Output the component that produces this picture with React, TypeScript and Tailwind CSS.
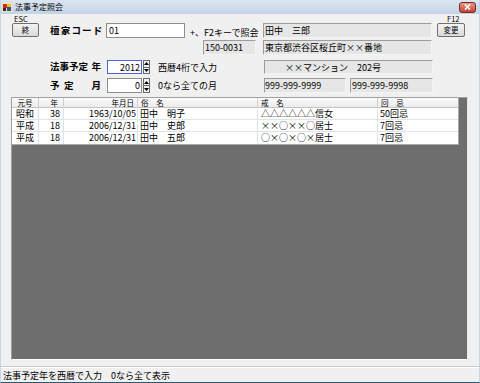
import React from 'react';

interface HojiRow {
  era: string;
  year: string;
  date: string;
  name: string;
  kaimyo: string;
  kaiki: string;
}

const rows: HojiRow[] = [
  { era: '昭和', year: '38', date: '1963/10/05', name: '田中　明子', kaimyo: '△△△△△△信女', kaiki: '50回忌' },
  { era: '平成', year: '18', date: '2006/12/31', name: '田中　史郎', kaimyo: '××○××○居士', kaiki: '7回忌' },
  { era: '平成', year: '18', date: '2006/12/31', name: '田中　五郎', kaimyo: '○×○×○×居士', kaiki: '7回忌' },
];

const cols = 'grid grid-cols-[27px_25px_74px_120px_120px_81px]';

const ReadBox = ({ className = '', children }: { className?: string; children?: React.ReactNode }) => (
  <div
    className={`h-full flex items-center bg-[#e6e6e6] border border-t-[#9c9c9c] border-l-[#9c9c9c] border-b-[#f4f4f4] border-r-[#f4f4f4] text-[9px] leading-none whitespace-nowrap overflow-hidden ${className}`}
  >
    {children}
  </div>
);

const WinButton = ({ label }: { label: string }) => (
  <div className="h-[14px] mb-[1px] flex items-center justify-center rounded-[2px] border border-[#707070] bg-linear-to-b from-[#f4f4f4] to-[#d9d9d9] text-[7.5px] leading-none">
    {label}
  </div>
);

const Spinner = () => (
  <div className="ml-[1px] w-[7px] h-full flex flex-col">
    <div className="flex-1 flex items-center justify-center border border-[#6a6a6a] bg-[#f2f2f2]">
      <svg width="5" height="3" viewBox="0 0 5 3">
        <path d="M2.5 0 L5 3 L0 3 Z" fill="#000" />
      </svg>
    </div>
    <div className="flex-1 flex items-center justify-center border border-t-0 border-[#6a6a6a] bg-[#f2f2f2]">
      <svg width="5" height="3" viewBox="0 0 5 3">
        <path d="M0 0 L5 0 L2.5 3 Z" fill="#000" />
      </svg>
    </div>
  </div>
);

export default function App() {
  return (
    <div className="w-[480px] h-[383px] flex flex-col bg-[#f0f0f0] border-x border-b border-x-[#c6d5e8] border-b-[#2c5a70] font-['Noto_Sans_CJK_JP',sans-serif] text-black overflow-hidden">
      {/* title bar */}
      <div className="h-[14px] shrink-0 flex items-center bg-linear-to-b from-[#dbe6f3] to-[#c3d3e7]">
        <svg className="ml-[1px]" width="10" height="10" viewBox="0 0 10 10">
          <rect x="0" y="1" width="10" height="9" fill="#f3e3b0" />
          <rect x="1" y="2" width="4" height="4" fill="#d02a1e" />
          <rect x="5" y="2" width="4" height="3" fill="#f0c020" />
          <rect x="1" y="6" width="3" height="3" fill="#2a2a2a" />
          <rect x="5" y="5" width="4" height="4" fill="#3050a0" />
        </svg>
        <span className="ml-[3px] text-[8px] leading-none">法事予定照会</span>
        <div className="ml-auto mr-[3px] w-[17px] h-[11px] rounded-[3px] border border-[#7b2a1f] bg-linear-to-b from-[#e8998c] to-[#c4402f] flex items-center justify-center">
          <svg width="7" height="6" viewBox="0 0 7 6">
            <path d="M1 0.5 L6 5.5 M6 0.5 L1 5.5" stroke="#fff" strokeWidth="1.6" />
          </svg>
        </div>
      </div>

      {/* row A */}
      <div className="h-[24px] shrink-0 flex items-end">
        <div className="ml-[11px] w-[27px] flex flex-col">
          <div className="h-[8px] pl-[2px] text-[7.5px] leading-[8px]">ESC</div>
          <WinButton label="終" />
        </div>
        <div className="ml-[11px] w-[56px] h-[15px] flex items-center text-[9.5px] font-bold tracking-[1.2px] leading-none">
          檀家コード
        </div>
        <div className="w-[79px] h-[15px] flex items-center pl-[2px] bg-white border border-[#8e8f8f] text-[9px] leading-none">
          01
        </div>
        <div className="ml-[5px] w-[73px] h-[15px] flex items-end pb-[1px] text-[9px] leading-none whitespace-nowrap">
          +、F2キーで照会
        </div>
        <div className="w-[169px] h-[15px]">
          <ReadBox className="pl-[1px]">田中　三郎</ReadBox>
        </div>
        <div className="ml-[5px] w-[28px] flex flex-col">
          <div className="h-[8px] pl-[10px] text-[7.5px] leading-[8px]">F12</div>
          <WinButton label="変更" />
        </div>
      </div>

      {/* row B */}
      <div className="mt-[2px] h-[15px] shrink-0 flex">
        <div className="ml-[202px] w-[53px]">
          <ReadBox className="pl-[1px]">150-0031</ReadBox>
        </div>
        <div className="ml-[7px] w-[169px]">
          <ReadBox className="pl-[1px]">東京都渋谷区桜丘町××番地</ReadBox>
        </div>
      </div>

      {/* row C */}
      <div className="mt-[5px] h-[14px] shrink-0 flex">
        <div className="ml-[49px] w-[51px] flex items-center justify-between text-[9.5px] font-bold leading-none">
          <span>法事予定</span>
          <span>年</span>
        </div>
        <div className="ml-[6px] w-[35px] h-full flex items-center justify-end pr-[1px] bg-white border border-[#4d63d8] text-[9px] leading-none">
          2012
        </div>
        <Spinner />
        <div className="ml-[8px] w-[106px] flex items-center text-[9px] leading-none whitespace-nowrap">
          西暦4桁で入力
        </div>
        <div className="w-[169px]">
          <ReadBox className="pl-[20px]">××マンション　202号</ReadBox>
        </div>
      </div>

      {/* row D */}
      <div className="mt-[4px] h-[15px] shrink-0 flex">
        <div className="ml-[49px] w-[51px] flex items-center text-[9.5px] font-bold leading-none">
          <span className="w-[14px]">予</span>
          <span>定</span>
          <span className="ml-auto">月</span>
        </div>
        <div className="ml-[6px] w-[35px] h-full flex items-center justify-end pr-[1px] bg-white border border-[#8e8f8f] text-[9px] leading-none">
          0
        </div>
        <Spinner />
        <div className="ml-[8px] w-[106px] flex items-center text-[9px] leading-none whitespace-nowrap">
          0なら全ての月
        </div>
        <div className="w-[82px]">
          <ReadBox>999-999-9999</ReadBox>
        </div>
        <div className="ml-[4px] w-[83px]">
          <ReadBox className="pl-[1px]">999-999-9998</ReadBox>
        </div>
      </div>

      {/* grid */}
      <div className="mt-[4px] ml-[10px] w-[457px] h-[263px] shrink-0 bg-[#6e6e6e] border border-t-[#a0a0a0] border-l-[#a0a0a0] border-b-[#ffffff] border-r-[#e8e8e8] overflow-hidden">
        <div className="w-[447px] bg-white border-b border-r border-[#a8a8a8]">
          <div className={`${cols} h-[10px] bg-linear-to-b from-[#fbfbfb] to-[#ececec] border-b border-[#c4c4c4] text-[7.5px] leading-[10px]`}>
            <div className="text-center border-r border-[#d0d0d0]">元号</div>
            <div className="text-right pr-[5px] border-r border-[#d0d0d0]">年</div>
            <div className="text-right pr-[3px] border-r border-[#d0d0d0]">年月日</div>
            <div className="pl-[3px] tracking-[3px] border-r border-[#d0d0d0]">俗 名</div>
            <div className="pl-[3px] tracking-[3px] border-r border-[#d0d0d0]">戒 名</div>
            <div className="pl-[3px] tracking-[3px]">回 忌</div>
          </div>
          {rows.map((r, i) => (
            <div
              key={i}
              className={`${cols} h-[12px] text-[9px] leading-[12px] ${i < rows.length - 1 ? 'border-b border-[#dbe3ec]' : ''}`}
            >
              <div className="text-center border-r border-[#dbe3ec] whitespace-nowrap">{r.era}</div>
              <div className="text-right pr-[3px] border-r border-[#dbe3ec]">{r.year}</div>
              <div className="text-right pr-[1px] border-r border-[#dbe3ec]">{r.date}</div>
              <div className="pl-[2px] border-r border-[#dbe3ec] whitespace-nowrap">{r.name}</div>
              <div className="pl-[3px] border-r border-[#dbe3ec] whitespace-nowrap">{r.kaimyo}</div>
              <div className="pl-[2px] whitespace-nowrap">{r.kaiki}</div>
            </div>
          ))}
        </div>
      </div>

      {/* status bar */}
      <div className="mt-[6px] h-[2px] shrink-0 border-t border-b border-t-[#c8c8c8] border-b-white" />
      <div className="flex-1 flex items-center pl-[2px] text-[9px] leading-none whitespace-nowrap">
        法事予定年を西暦で入力　0なら全て表示
      </div>
    </div>
  );
}
